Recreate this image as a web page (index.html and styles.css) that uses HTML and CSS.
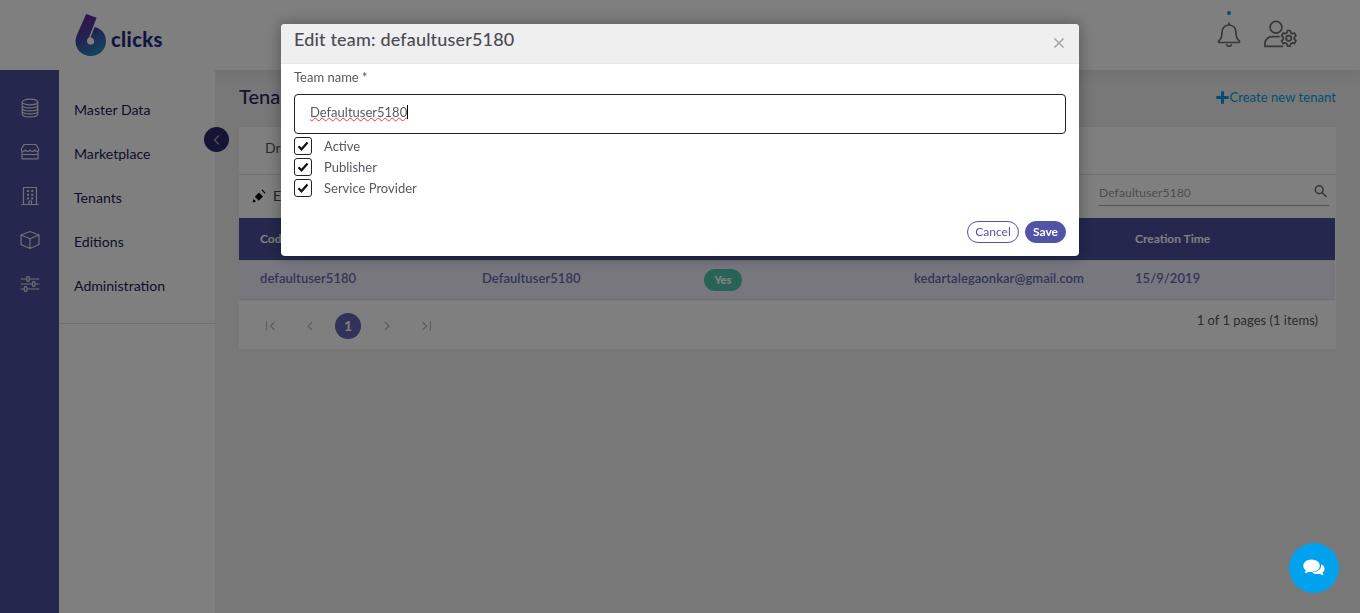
FILE: index.html
```html
<!DOCTYPE html>
<html lang="en">
<head>
<meta charset="utf-8">
<title>6clicks - Tenants</title>
<link rel="stylesheet" href="styles.css">
</head>
<body>
<div class="app">
  <header class="topbar">
    <a class="logo">
      <svg width="32" height="44" viewBox="0 0 32 44">
        <defs><linearGradient id="brand" x1="0.3" y1="0" x2="0.75" y2="1"><stop offset="0" stop-color="#62249a"/><stop offset=".45" stop-color="#45459f"/><stop offset="1" stop-color="#2590c4"/></linearGradient></defs>
        <path fill="url(#brand)" d="M11.200 1 L21.600 4.800 L14 24.500 C11.800 25.500 11.800 28 12.300 29.500 C13.500 32.800 19 32.500 19.200 28.500 C19.200 26.500 18 25 15.600 24.300 L19.600 14 C27 15.500 31 21.500 31 28 C31 36.500 24.500 43 15.700 43 C7 43 .5 36.500 .5 28 C.5 25 1.500 23 2.500 20.500 Z"/>
      </svg>
      <span class="logo-text">clicks</span>
    </a>
    <div class="top-actions">
      <div class="bell">
        <i class="bell-dot"></i>
        <svg width="24" height="26" viewBox="0 0 24 26" fill="none" stroke="#6e6e6e" stroke-width="1.700" stroke-linecap="round" stroke-linejoin="round">
          <path d="M12 1.200v1.800M12 3C7.300 3 5 6.500 5 10.500c0 5-1.400 7-3.300 8.500-.6.6-.3 1.500.6 1.500h19.400c.9 0 1.200-.9.600-1.500C20.400 17.500 19 15.500 19 10.500 19 6.500 16.700 3 12 3zM9.500 22.800c.7 2 4.300 2 5 0"/>
        </svg>
      </div>
      <svg class="user" width="34" height="28" viewBox="0 0 34 28" fill="none" stroke="#6e6e6e" stroke-width="1.700" stroke-linejoin="round" stroke-linecap="round">
        <circle cx="12" cy="7.200" r="5.900"/>
        <path d="M15 16.600H8.500C4 16.600 1 19.500 1 23.700v2.600h17.500"/>
        <path d="M23.500 10.500h2.600l.6 2.300 1.500.9 2.200-.7 1.600 2.800-1.700 1.600v1.800l1.700 1.600-1.600 2.800-2.200-.7-1.500.9-.6 2.300h-2.600l-.6-2.300-1.500-.9-2.200.7-1.600-2.800 1.700-1.600v-1.800l-1.700-1.600 1.600-2.800 2.200.7 1.500-.9z"/>
        <circle cx="24.800" cy="18.300" r="2.600"/>
      </svg>
    </div>
  </header>
  <div class="body">
    <nav class="rail">
      <svg viewBox="0 0 20 20"><ellipse cx="10" cy="4" rx="7.800" ry="2.900"/><path d="M2.200 4v12c0 3.900 15.600 3.900 15.600 0V4M2.200 7c0 3.900 15.600 3.900 15.600 0M2.200 10c0 3.900 15.600 3.900 15.600 0M2.200 13c0 3.900 15.600 3.900 15.600 0"/></svg>
      <svg viewBox="0 0 20 20"><path d="M4 2.500h12l2.800 5c0 2.500-3.400 2.500-4.200.5-.6 1.800-4 1.800-4.600 0-.6 1.800-4 1.800-4.600 0-.8 2-4.200 2-4.200-.5zM2 9.500v7.300h16V9.500M2 12.500h16"/></svg>
      <svg viewBox="0 0 20 20"><path d="M3.500 18.500V1.500h13v17M1.500 18.500h17M9 18v-3h2.500v3"/><path class="windows" d="M7 4h2v2H7zM11.200 4h2v2h-2zM7 7.700h2v2H7zM11.200 7.700h2v2h-2zM7 11.400h2v2H7zM11.200 11.400h2v2h-2z"/></svg>
      <svg viewBox="0 0 20 20"><path d="M10 1.500L19 5v9.500l-9 4-9-4V5zM1 5l9 3.800L19 5M10 8.800v9.700"/></svg>
      <svg viewBox="0 0 20 20"><path d="M.7 5h6M9.500 5h9.800M.7 10h11.600M15 10h4.300M.7 15h3.600M7 15h12.300"/><rect x="6.700" y="2.700" width="2.600" height="4.600" rx="1"/><rect x="12.400" y="7.700" width="2.600" height="4.600" rx="1"/><rect x="4.300" y="12.700" width="2.600" height="4.600" rx="1"/></svg>
    </nav>
    <aside class="menu">
      <div class="menu-items"><a>Master Data</a><a>Marketplace</a><a>Tenants</a><a>Editions</a><a>Administration</a></div>
      <button class="collapse"><svg width="10" height="12" viewBox="0 0 10 12"><path d="M7 1.500L2.500 6 7 10.500"/></svg></button>
    </aside>
    <main class="content">
      <div class="heading"><h1>Tenants</h1><a class="create"><svg width="13" height="13" viewBox="0 0 13 13"><path d="M6.500.3v12.400M.3 6.500h12.400"/></svg>Create new tenant</a></div>
      <section class="grid">
        <div class="group-drop">Drag here</div>
        <div class="toolbar">
          <span class="edit"><svg width="14" height="14" viewBox="0 0 14 14"><path d="M.5 13.500l1-3.600 2.600 2.600zM2.800 7.800L7 3.600l3.900 3.800-4.300 4.300L5.200 10zM9.600 1.200l.9-.7 3 3.400-.8.8z"/></svg>Edit</span>
          <span class="search">Defaultuser5180<svg width="14" height="14" viewBox="0 0 14 14"><circle cx="5.200" cy="4.700" r="3.900"/><path d="M8 7.500l4.500 4.500"/></svg></span>
        </div>
        <div class="cols thead"><span>Code</span><span>Name</span><span>Active</span><span>Email</span><span>Creation Time</span></div>
        <div class="cols row"><span>defaultuser5180</span><span>Defaultuser5180</span><span><b class="badge">Yes</b></span><span>kedartalegaonkar@gmail.com</span><span>15/9/2019</span></div>
        <div class="pager">
          <svg viewBox="0 0 12 12"><path d="M1.500 1.500v9M9.500 2L5.500 6l4 4"/></svg>
          <svg viewBox="0 0 12 12"><path d="M8 2L4 6l4 4"/></svg>
          <b class="page">1</b>
          <svg viewBox="0 0 12 12"><path d="M4 2l4 4-4 4"/></svg>
          <svg viewBox="0 0 12 12"><path d="M2.500 2l4 4-4 4M10.500 1.500v9"/></svg>
          <span class="summary">1 of 1 pages (1 items)</span>
        </div>
      </section>
    </main>
  </div>
</div>
<div class="backdrop">
  <div class="modal">
    <div class="modal-head"><h2>Edit team: defaultuser5180</h2><svg class="close" width="12" height="12" viewBox="0 0 12 12"><path d="M1.500 1.500l9 9M10.500 1.500l-9 9"/></svg></div>
    <div class="modal-body">
      <label class="field-label">Team name *</label>
      <div class="field"><span class="value">Defaultuser5180</span><i class="caret"></i></div>
      <label class="check"><svg viewBox="0 0 16 16"><path d="M3.500 8.300l3 3 6-6.800"/></svg>Active</label>
      <label class="check"><svg viewBox="0 0 16 16"><path d="M3.500 8.300l3 3 6-6.800"/></svg>Publisher</label>
      <label class="check"><svg viewBox="0 0 16 16"><path d="M3.500 8.300l3 3 6-6.800"/></svg>Service Provider</label>
    </div>
    <div class="modal-foot"><button class="btn">Cancel</button><button class="btn save">Save</button></div>
  </div>
</div>
<div class="chat"><svg width="22" height="18" viewBox="0 0 22 18"><path d="M8.500.5c4.600 0 8.300 2.800 8.300 6.300S13.100 13 8.500 13c-1 0-1.900-.1-2.700-.3-1.300.9-2.700 1.300-4.300 1.300.7-.7 1.200-1.500 1.300-2.600C1.200 10.200.3 8.600.3 6.800.3 3.300 4 .5 8.500.5z"/><path d="M18.200 5.200c2.100 1 3.400 2.600 3.400 4.500 0 1.500-.7 2.800-2 3.800.1 1 .6 1.900 1.200 2.700-1.600-.1-2.900-.6-4.100-1.400-2.800.7-5.800.1-7.700-1.400 5.400-.1 9.900-3.500 9.200-8.200z"/></svg></div>
</body>
</html>
```
FILE: styles.css
```css
* { box-sizing: border-box; }
body { margin: 0; font: 14px/20px Lato, "Open Sans", sans-serif; color: #575962; background: #f0f0f0; overflow: hidden; }
h1, h2 { margin: 0; font-weight: 500; }
button { font: inherit; padding: 0; }
svg { flex: none; }
.app { height: 613px; display: flex; flex-direction: column; }
.topbar { height: 70px; flex: none; background: #fff; display: flex; justify-content: space-between; padding: 0 62px 0 75px; position: relative; box-shadow: 0 1px 15px 1px rgba(69, 65, 78, .12); }
.logo { display: flex; padding-top: 13px; gap: 4px; }
.logo-text { font-weight: 900; font-size: 20px; line-height: 24px; letter-spacing: .4px; padding-top: 14px; color: #1c2e88; }
.top-actions { display: flex; gap: 23px; padding-top: 11px; }
.bell { display: flex; flex-direction: column; align-items: center; gap: 7px; }
.bell-dot { width: 4px; height: 4px; border-radius: 50%; background: #00a0e8; }
.user { margin-top: 9px; }
.body { flex: 1; display: flex; }
.rail { width: 59px; background: #4c4f9c; display: flex; flex-direction: column; align-items: center; padding-top: 28px; gap: 24px; }
.rail svg { width: 20px; height: 20px; fill: none; stroke: #e2e2e8; stroke-width: 1.200; stroke-linejoin: round; }
.rail .windows { fill: #e2e2e8; stroke: none; }
.menu { width: 156px; background: #fff; position: relative; }
.menu-items { height: 254px; padding: 18px 0 0 15px; border-bottom: 1px solid #e0e0e4; }
.menu a { display: block; height: 44px; line-height: 44px; font-size: 14.1px; color: #1c1c50; }
.collapse { position: absolute; right: -14px; top: 57px; width: 25px; height: 25px; border: 0; border-radius: 50%; background: #2a2864; display: grid; place-items: center; }
.collapse path { fill: none; stroke: #fff; }
.content { flex: 1; padding: 14px 24px; }
.heading { display: flex; justify-content: space-between; align-items: center; height: 26px; margin-bottom: 16px; }
.heading h1 { font-size: 20px; line-height: 26px; margin-top: -2px; color: #2a2864; }
.create { display: flex; align-items: center; color: #00a0e8; font-size: 13px; letter-spacing: .06px; }
.create path { stroke: #00a0e8; stroke-width: 3; fill: none; }
.grid { background: #fff; border-top: 1px solid #e7e7e7; height: 223px; }
.group-drop { height: 48px; padding: 11px 26px; border-bottom: 1px solid #e0e0e0; overflow: hidden; white-space: nowrap; }
.toolbar { height: 43px; display: flex; justify-content: space-between; padding: 0 7px 0 13px; }
.edit { display: flex; gap: 7px; align-items: center; padding-bottom: 2px; color: #444; }
.edit path { fill: #000; }
.search { width: 230px; height: 31px; border-bottom: 1px solid #a5a5a5; display: flex; justify-content: space-between; padding: 8px 1px 0 0; font-size: 12px; letter-spacing: .15px; color: #9a9a9a; }
.search svg { stroke: #707070; stroke-width: 1.600; fill: none; margin-top: 2px; }
.cols { display: grid; grid-template-columns: 222px 222px 210px 221px 1fr; padding-left: 21px; margin-right: 1px; }
.thead { height: 42px; background: #4c4f9c; color: #fff; font-weight: 700; font-size: 12px; line-height: 42px; }
.row { height: 40px; background: #f0effa; border-top: 1px solid #e5e5e5; border-bottom: 1px solid #dedee0; font-weight: 600; font-size: 13px; line-height: 34px; letter-spacing: .06px; color: #6769b5; }
.badge { display: block; width: 38px; height: 22px; border-radius: 11px; background: #4fc7ac; color: #fff; font-size: 11px; font-weight: 800; line-height: 21px; text-align: center; margin-top: 8px; }
.pager { height: 49px; display: flex; align-items: center; padding: 2px 18px 0 26px; gap: 27px; }
.pager svg { width: 12px; height: 12px; fill: none; stroke: #bcbcbc; stroke-width: 1.200; }
.page { width: 26px; height: 26px; margin: 0 -7px 0 -8px; border-radius: 50%; background: #6264b3; color: #fff; text-align: center; font-size: 14px; line-height: 25px; }
.summary { margin: -11px 0 0 auto; font-size: 13px; }
.backdrop { position: fixed; inset: 0; background: rgba(0, 0, 0, .5); padding: 24px 281px; }
.modal { height: 232px; background: #fff; border-radius: 4px; overflow: hidden; box-shadow: 0 0 15px 1px rgba(0, 0, 0, .3); }
.modal-head { height: 40px; background: #efefef; border-bottom: 1px solid #e6eaf0; display: flex; justify-content: space-between; padding: 5px 14px 0 13px; }
.modal-head h2 { font-size: 18px; line-height: 20px; letter-spacing: .17px; color: #4b4b55; }
.close { margin-top: 8px; }
.close path { stroke: #a5a5a5; stroke-width: 1.600; }
.modal-body { padding: 3px 13px 0; height: 153px; font-size: 13px; }
.field-label { display: block; height: 27px; line-height: 20px; }
.field { height: 40px; border: 1px solid #222; border-radius: 4px; display: flex; padding: 8px 15px; margin-bottom: 1px; }
.value { height: 18px; line-height: 18px; text-decoration: underline wavy #f33 1px; text-underline-offset: 0; text-decoration-skip-ink: none; }
.caret { width: 1px; height: 14px; margin-top: 2px; background: #000; }
.check { display: flex; height: 21px; align-items: center; gap: 12px; }
.check svg { width: 18px; height: 18px; border: 1px solid #222; border-radius: 3px; fill: none; stroke: #111; stroke-width: 2.200; }
.modal-foot { display: flex; justify-content: flex-end; gap: 6px; padding: 4px 13px 0; }
.btn { width: 52px; height: 22px; border: 1px solid #5154a5; border-radius: 11px; background: #fff; color: #5154a5; font-size: 12px; line-height: 20px; }
.save { width: 41px; background: #5154a5; color: #fff; font-weight: 700; }
.chat { position: fixed; right: 21px; bottom: 20px; width: 50px; height: 50px; border-radius: 50%; background: #00a2ee; display: grid; place-items: center; }
.chat path { fill: #fff; }
```
